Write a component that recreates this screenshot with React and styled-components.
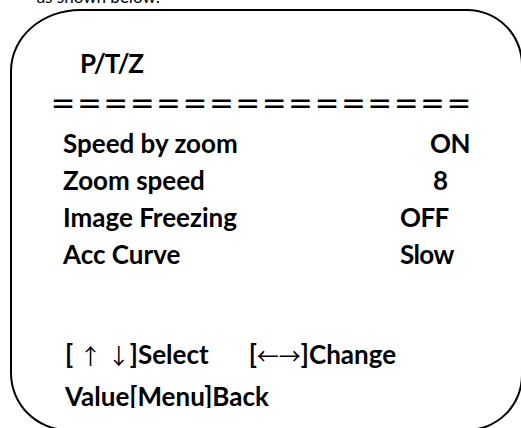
import * as React from "react";
import styled, { createGlobalStyle } from "styled-components";

/* ------------------------------- page setup ------------------------------- */

const GlobalStyle = createGlobalStyle`
  html, body {
    margin: 0;
    padding: 0;
    background: #ffffff;
    overflow: hidden;
  }
  body {
    font-family: "Lato", "Liberation Sans", sans-serif;
    color: #000000;
  }
`;

const Page = styled.div`
  width: 521px;
  height: 428px;
  overflow: hidden;
  position: relative;
`;

// clipped tail of the sentence that sits above the picture
const Caption = styled.div`
  width: 160px;
  height: 3px;
  overflow: hidden;
  font-size: 17px;
  line-height: 17px;
  white-space: nowrap;
  text-align: right;
  & > span {
    display: block;
    margin-top: -12px;
  }
`;

// rounded text box; its right and bottom edges sit just past the crop
const Frame = styled.div`
  box-sizing: border-box;
  margin: 6px 0 0 10px;
  width: 513px;
  height: 422px;
  border: 2px solid #000000;
  border-radius: 70px 56px 56px 58px / 62px 56px 56px 58px;
  padding: 34px 0 0 51px;
  font-weight: 700;
  font-size: 26px;
  line-height: 37px;
`;

const Title = styled.div`
  margin-left: 17px;
  letter-spacing: -1.2px;
`;

const Divider = styled.div`
  margin-left: -13px;
  font-family: "Noto Sans CJK SC", sans-serif;
  font-weight: 700;
  font-size: 26px;
  line-height: 30px;
  height: 30px;
  margin-top: 6px;
  letter-spacing: 0.4px;
  white-space: nowrap;
`;

const List = styled.div`
  display: grid;
  grid-template-columns: 337px 1fr;
  margin-top: 7px;
`;

const Label = styled.div`
  white-space: nowrap;
`;

const Value = styled.div`
  padding-left: ${(p) => p.$indent || 0}px;
  white-space: nowrap;
  letter-spacing: -0.6px;
`;

const Footer = styled.div`
  margin: 60px 0 0 2px;
  white-space: pre;
`;

// the last line is cut just under its baseline, as in the original text box
const FooterLine = styled.div`
  line-height: 42px;
  height: ${(p) => (p.$cut ? "33px" : "42px")};
  overflow: hidden;
`;

const Gap = styled.span`
  display: inline-block;
  width: 40px;
`;

const Arrow = styled.span`
  font-family: "Noto Sans CJK SC", sans-serif;
  font-weight: 400;
  font-size: 22px;
`;

/* --------------------------------- data ---------------------------------- */

const items = [
  { label: "Speed by zoom", value: "ON", indent: 30 },
  { label: "Zoom speed", value: "8", indent: 33 },
  { label: "Image Freezing", value: "OFF", indent: 0 },
  { label: "Acc Curve", value: "Slow", indent: 0 },
];

/* ******************************** RENDERING ******************************* */

function App() {
  return (
    <>
      <GlobalStyle />
      <Page>
        <Caption>
          <span>as shown below:</span>
        </Caption>
        <Frame>
          <Title>P/T/Z</Title>
          <Divider>{"＝".repeat(16)}</Divider>
          <List>
            {items.map((it) => (
              <React.Fragment key={it.label}>
                <Label>{it.label}</Label>
                <Value $indent={it.indent}>{it.value}</Value>
              </React.Fragment>
            ))}
          </List>
          <Footer>
            <FooterLine>
              [ <Arrow>↑</Arrow> <Arrow>↓</Arrow>]Select
              <Gap />[<Arrow>←→</Arrow>]Change
            </FooterLine>
            <FooterLine $cut>Value[Menu]Back</FooterLine>
          </Footer>
        </Frame>
      </Page>
    </>
  );
}

export default App;
